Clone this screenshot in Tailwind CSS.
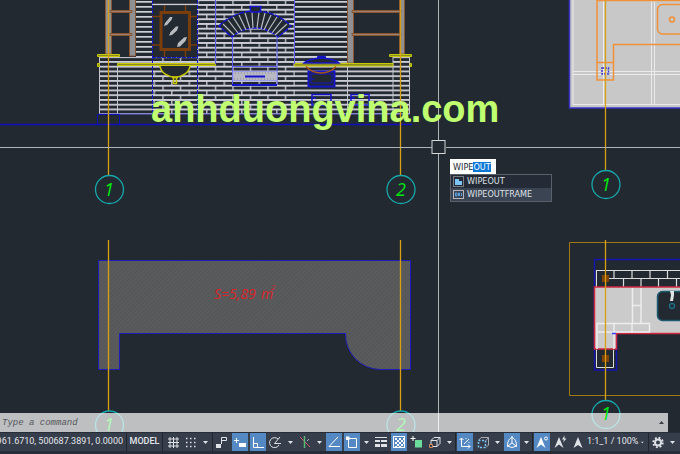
<!DOCTYPE html>
<html lang="en">
<head>
    <meta charset="UTF-8">
    <meta name="viewport" content="width=device-width, initial-scale=1.0">
    <title>Drawing</title>
    <script src="https://cdn.jsdelivr.net/npm/@tailwindcss/browser@4"></script>
</head>
<body class="h-screen flex flex-col overflow-hidden bg-[#222930] font-['Roboto',sans-serif]">

    <!-- Model space -->
    <main class="relative flex-1 min-h-0 overflow-hidden">
        <svg class="absolute inset-0 w-full h-full" viewBox="0 0 680 432" preserveAspectRatio="xMinYMin slice" fill="none">
            <defs>
                <pattern id="siding-top" width="10" height="5" y="1" patternUnits="userSpaceOnUse">
                    <rect width="10" height="1.700" fill="#ccd0d4"/>
                </pattern>
                <pattern id="siding" width="10" height="4.750" y="70.500" patternUnits="userSpaceOnUse">
                    <rect width="10" height="1.800" fill="#cdcdd8"/>
                </pattern>
                <pattern id="brick" width="17.500" height="9.500" x="206" y="70.500" patternUnits="userSpaceOnUse">
                    <path d="M0 .900H17.500M0 5.650H17.500" stroke="#cdcdd8" stroke-width="1.800"/>
                    <path d="M.800 .900V5.600M9.500 5.600V9.500" stroke="#cdcdd8" stroke-width="1.300"/>
                </pattern>
                <pattern id="hatch" width="3" height="3" patternUnits="userSpaceOnUse" patternTransform="rotate(45)">
                    <rect width="3" height="3" fill="#5a5b5d"/>
                    <rect width="1" height="3" fill="#545557"/>
                </pattern>
            </defs>

            <!-- Elevation: walls -->
            <rect x="136" y="0" width="16" height="57" fill="url(#siding-top)"/>
            <rect x="99" y="57" width="54" height="57" fill="url(#siding)"/>
            <rect x="152" y="57" width="143" height="57" fill="url(#brick)"/>
            <rect x="197" y="0" width="98" height="57" fill="url(#brick)"/>
            <rect x="295" y="0" width="52" height="57" fill="url(#siding-top)"/>
            <rect x="295" y="57" width="52" height="57" fill="url(#siding)"/>
            <rect x="347" y="66" width="63" height="48" fill="url(#siding)"/>
            <rect x="393" y="57" width="17" height="10" fill="url(#siding)"/>
            <path d="M99.500 57V114M117.500 66V114M347.500 66V114M393 57V114M409.500 57V114" stroke="#c4c6cc"/>
            <path d="M99 114H410" stroke="#6a6ae0"/>
            <path d="M152 4.500H197" stroke="#cdcdd8" stroke-width="1.500"/>

            <!-- Elevation: shelves -->
            <g stroke="#8a5630">
                <path d="M105.500 -1V54H111.500V-1M129.500 -1V56H135.500V-1M347.500 -1V63H353.500V-1M399.500 -1V54H404.500V-1" fill="#8f9093"/>
                <path d="M110 10.500H132V12.500H110zM110 33.500H132V35.500H110zM352 10.500H401V12.500H352zM352 33.500H401V35.500H352z" fill="#9a8070"/>
            </g>

            <!-- Elevation: mirror and basin -->
            <rect x="152" y="5.500" width="45" height="52" fill="#222930"/>
            <path d="M152.500 0V114M204.500 0V0M197.500 0V114M152 57.500H197" stroke="#1414c8" stroke-dasharray="4 1"/>
            <path d="M164.500 5V57M185.500 5V57M152 16.500H197M152 45H197" stroke="#7a3d0c" stroke-width="1.500"/>
            <rect x="161" y="12.500" width="28.500" height="37" fill="#222930" stroke="#7a3d0c" stroke-width="3"/>
            <path d="M164 26L165 23L170 17L172.500 17L171.500 20L167 25zM169 35.500L170.500 32L176 26.500H178.500L177 30.500L172 35zM177 47L178 43L184 37.500L187 37L185.500 41L180 46.500z" fill="#b8bbbf"/>
            <g fill="#8c8c24" stroke="#c8c800">
                <path d="M97.500 54.500H119.500V56.500H97.500zM117.500 63.500H215.500V65.500H117.500zM97.500 63.500H99.500V66.500H97.500z"/>
                <path d="M389.500 54.500H411.500V56.500H389.500zM294.500 63.500H393V66H294.500zM410 63.500H411.500V66.500H410z"/>
            </g>
            <path d="M160 66C161 73 168 77 175 77S189 73 190 66" fill="#222930" stroke="#c8c800" stroke-width="1.500"/>
            <path d="M172 77.500H178M173.500 78V83.500H176.500V78" stroke="#c8c800" stroke-width="1.500"/>

            <!-- Elevation: fireplace arch -->
            <path d="M219 26A50.700 50.700 0 0 1 291 26L278 37A33.700 33.700 0 0 0 232 37z" fill="#222930" stroke="#1414c8" stroke-width="1.500" stroke-dasharray="5 1"/>
            <path d="M223 24L234 35M228 20L238 33M233 17L242 31M239 15L246 30M245 13L250 29M252 12L253 28M259 12L257 28M265 13L261 29M271 15L264 30M277 17L268 31M282 20L272 33M287 24L275 35" stroke="#b8bbbf" stroke-width="1.200"/>
            <path d="M250 6.500H261L260 12H251z" fill="#222930" stroke="#1414c8" stroke-width="1.500"/>
            <path d="M215.500 0V64M294.500 0V64M232.500 37V85M277 37V85M232 66.500H277M232 85H277" stroke="#5a5af0"/>
            <rect x="233" y="71.500" width="44" height="9" fill="#b9b9c6" stroke="#9c9cf0"/>
            <path d="M235 73H276M234 79H276" stroke="#8c8c92" stroke-dasharray="1 2"/>
            <path d="M245 76.500H265M232 85H277" stroke="#1414c8" stroke-width="2"/>

            <!-- Elevation: sink on the right -->
            <path d="M304 63Q308 59 321 58Q335 59 339 63zM318 58V56.500H325V58" fill="#222930" stroke="#1414c8" stroke-width="1.500"/>
            <rect x="308.500" y="71.500" width="26" height="15" fill="#222930" stroke="#1414c8" stroke-width="2"/>
            <path d="M311 74H332V83H311zM311 79H315" stroke="#1414c8"/>
            <path d="M306 66.500Q312 73 321 73T336 66.500" stroke="#a5561c" stroke-width="1.500"/>
            <path d="M312 94.500H331V105H312zM351 94.500H369V105H351zM312 98H316M351 98H355" stroke="#1414c8" stroke-width="1.500"/>
            <path d="M0 124.500H412" stroke="#1010c0" stroke-width="1.500"/>
            <path d="M97.500 124V114.500H119.500V124M345.500 114V124" stroke="#1010b0"/>

            <!-- Top right plan -->
            <path d="M569.500 -1V108H681V-1z" fill="#c8c8c8" stroke="#3a34c8" stroke-width="1.500"/>
            <path d="M573 0V104.500H680M603.500 0V104M651.500 0V104M654.500 0V104M573 71.500H680M573 74.500H680" stroke="#ebebeb"/>
            <path d="M597 0V80H613.500V44.500H680M597 .500H680M597 62.500H613.500" stroke="#f0913a" stroke-width="1.500"/>
            <rect x="657.500" y="4.500" width="40" height="29.500" rx="5" stroke="#f0913a" stroke-width="1.500"/>
            <circle cx="672" cy="19.500" r="2.500" stroke="#f0913a" stroke-width="1.500"/>
            <rect x="602" y="68" width="6.500" height="6" stroke="#3a34c8" stroke-width="1.500" stroke-dasharray="2 1"/>

            <!-- Counter area -->
            <path d="M98.500 260.500H410.500V369.500H380A35 35 0 0 1 345.500 333.500H119.500V369.500H98.500z" fill="url(#hatch)" stroke="#1c1cb8"/>
            <g class="font-['Open_Sans',sans-serif] italic" fill="#dc2428" font-size="14">
                <text x="214" y="299">S=5,89</text>
                <text x="261" y="299">m</text>
                <text x="271" y="290" font-size="8">2</text>
            </g>

            <!-- Bottom right plan -->
            <path d="M681 242.500H569.500V395.500H681" stroke="#a07814"/>
            <path d="M680 259.500H594.500V370H616.500V333" stroke="#1414b0" stroke-width="1.500"/>
            <path d="M680 270.500H596.500V287M596 278.500H680M614 270V279M632 270V279M650 270V279M667.500 270V279M605.500 279V287M623.500 279V287M641 279V287M658.500 279V287M676.500 279V287" stroke="#dcdcdc" stroke-width="1.200"/>
            <rect x="597" y="271" width="9" height="16" fill="#222930"/>
            <path d="M596.500 349V367.500H613.500V349" fill="#222930" stroke="#dcdcdc"/>
            <path d="M681 287H594.500V349H616.500V333.500H681" fill="#cbcbcb" stroke="#d02840" stroke-width="1.500"/>
            <path d="M632.500 288V324M641 288V324M632 305.500H641M597 349V323.500H649.500V332H597M614 323V349M632 323V332" stroke="#ededed" stroke-width="1.500"/>
            <path d="M612 333.500H616" stroke="#4040ff" stroke-width="1.500"/>
            <rect x="657.500" y="291.500" width="40" height="29" rx="5" fill="#222930" stroke="#1c5a70" stroke-width="1.500"/>
            <circle cx="672" cy="306" r="2.500" stroke="#1c6a80" stroke-width="1.500"/>
            <path d="M670 291H674V295L673 301H670L671 295z" fill="#dfe6e8"/>
            <path d="M602 275H609V282H602zM602 355H609V362H602z" fill="#804408"/>

            <!-- Grid axes -->
            <path d="M108.500 0V175M400.500 0V175M108.500 240V411M400.500 240V411M605.500 0V171M605.500 240V400" stroke="#d8a010" stroke-width="1.300"/>
            <g stroke="#16a8ac" stroke-width="1.300">
                <circle cx="109.500" cy="189.500" r="14"/>
                <circle cx="401" cy="189.500" r="14"/>
                <circle cx="109.500" cy="425" r="14"/>
                <circle cx="401" cy="425" r="14"/>
                <circle cx="606" cy="184.500" r="14"/>
                <circle cx="606" cy="414.500" r="14"/>
            </g>
            <g class="font-['Open_Sans',sans-serif] italic" fill="#00e810" font-size="18" text-anchor="middle">
                <text x="109" y="196">1</text>
                <text x="401" y="196">2</text>
                <text x="109" y="431">1</text>
                <text x="401" y="431">2</text>
                <text x="606" y="191">1</text>
            </g>

            <!-- Crosshair -->
            <path d="M0 147.500H432M446 147.500H680M438.500 0V140M438.500 154V432" stroke="#b0b3b6"/>
            <rect x="432" y="140.500" width="13" height="13" stroke="#d6d8da"/>

            <text class="font-['Liberation_Sans',sans-serif] font-bold" x="151" y="122" font-size="38" fill="#bfff70">anhduongvina.com</text>
        </svg>

        <!-- Dynamic input -->
        <div class="absolute left-[450px] top-[159px] w-[102px] font-['DejaVu_Sans_Condensed','DejaVu_Sans',sans-serif] text-[9px] leading-[13px]">
            <input id="dynamic-input" type="text" value="WIPEOUT" aria-label="Command" autofocus class="block w-[46px] h-[15px] pl-[3px] bg-white text-[#222930] caret-transparent outline-none selection:bg-[#0a78d6] selection:text-white">
            <ul class="border border-[#5a606a] bg-[#252b36] text-[#dfe2e6]">
                <li>
                    <button class="flex w-full items-center gap-[3px] pl-[2px]">
                        <svg class="w-[11px] h-[11px]" viewBox="0 0 11 11" fill="none"><rect x=".500" y=".500" width="10" height="10" stroke="#c8ccd2" stroke-dasharray="1 1"/><path d="M2 3H6V5H9V9H2z" fill="#7cc4f4"/></svg>
                        WIPEOUT
                    </button>
                </li>
                <li>
                    <button class="flex w-full items-center gap-[3px] pl-[2px] bg-[#3b4453]">
                        <svg class="w-[11px] h-[11px]" viewBox="0 0 11 11" fill="none"><rect x=".500" y="1.500" width="10" height="8" stroke="#b4b8be"/><path d="M2.500 4V7H4V4zM5.500 7V4H6.500V7M8.500 4V7" stroke="#5aa0dc"/></svg>
                        WIPEOUTFRAME
                    </button>
                </li>
            </ul>
        </div>

        <!-- Command line -->
        <div class="absolute left-0 right-3 bottom-0 h-[19px] flex items-center bg-white/70">
            <input type="text" placeholder="Type a command" aria-label="Command line" class="flex-1 h-full pl-[2px] font-['Liberation_Mono',monospace] italic text-[9px] placeholder:text-[#55585c] outline-none">
            <button aria-label="Command history" class="w-[13px] h-full flex items-center justify-center">
                <svg class="w-[5px] h-[3px]" viewBox="0 0 5 3"><path d="M0 3L2.500 0L5 3z" fill="#3a3e44"/></svg>
            </button>
        </div>
        <svg class="absolute inset-0 w-full h-full pointer-events-none" viewBox="0 0 680 432" preserveAspectRatio="xMinYMin slice">
            <text class="font-['Open_Sans',sans-serif] italic" x="606" y="420" font-size="18" text-anchor="middle" fill="#00e810">1</text>
            <path d="M438.500 413V432" stroke="#f0f0f0"/>
        </svg>
    </main>

    <!-- Status bar -->
    <footer class="h-[22px] shrink-0 flex pt-px pb-[3px] bg-[#272d38] text-[9px] text-[#e4e6ea]">
        <div class="w-[127px] shrink-0 flex items-center justify-end overflow-hidden whitespace-nowrap pr-[3px] border-r border-[#20252e] bg-[#363e4c]">4961.6710, 500687.3891, 0.0000</div>
        <button class="w-9 border-r border-[#20252e] bg-[#363e4c] font-medium">MODEL</button>

        <div class="flex shrink-0 px-px border-r border-[#20252e] bg-[#363e4c]">
            <button aria-label="Grid" class="w-[18px]"><svg class="w-[18px] h-[18px]" viewBox="0 0 18 18" fill="none" stroke="#dfe2e6"><path d="M6 4V15M9.500 4V15M13 4V15M4 6H15M4 9.500H15M4 13H15"/></svg></button>
            <button aria-label="Snap" class="w-[18px]"><svg class="w-[18px] h-[18px]" viewBox="0 0 18 18" fill="none" stroke="#dfe2e6" stroke-width="1.500" stroke-dasharray="1.500 2.500"><path d="M4 5.500H14M4 9.500H14M4 13.500H14"/></svg></button>
            <button aria-label="Snap options" class="w-[11px] flex items-center justify-center"><svg class="w-[5px] h-[3px]" viewBox="0 0 5 3"><path d="M0 0H5L2.500 3z" fill="#dfe2e6"/></svg></button>
        </div>

        <div class="flex shrink-0 border-r border-[#20252e] bg-[#363e4c]">
            <button aria-label="Infer constraints" class="w-[18px]"><svg class="w-[18px] h-[18px]" viewBox="0 0 18 18" fill="none" stroke="#dfe2e6"><path d="M8.500 4.500H13.500V7.500H8.500zM8.500 7V11"/><path d="M3 11H8V15H3z" fill="#dfe2e6" stroke="none"/></svg></button>
            <button aria-label="Dynamic input" class="w-[18px] border-x border-[#363e4c] bg-[#5589c4]"><svg class="w-4 h-[18px]" viewBox="0 0 16 18" fill="none"><path d="M2 7.500H7M4.500 5V10" stroke="#fff"/><path d="M7 10H14V14H7z" fill="#fff"/></svg></button>
            <button aria-label="Ortho" class="w-[18px] border-x border-[#363e4c] bg-[#5589c4]"><svg class="w-4 h-[18px]" viewBox="0 0 16 18" fill="none" stroke="#fff"><path d="M3.500 4V14.500H14M4 10.500H7.500V14"/></svg></button>
            <button aria-label="Polar tracking" class="w-[18px]"><svg class="w-[18px] h-[18px]" viewBox="0 0 18 18" fill="none" stroke="#dfe2e6"><path d="M11 6A5 5 0 1 0 12 12M7.500 10.500L13 4M7.500 10.500H14"/></svg></button>
            <button aria-label="Polar options" class="w-[11px] flex items-center justify-center"><svg class="w-[5px] h-[3px]" viewBox="0 0 5 3"><path d="M0 0H5L2.500 3z" fill="#dfe2e6"/></svg></button>
            <button aria-label="Isodraft" class="w-[18px]"><svg class="w-[18px] h-[18px]" viewBox="0 0 18 18" fill="none"><path d="M4 4L14 14" stroke="#d05a64"/><path d="M8.500 3V15" stroke="#58b878" stroke-width="1.500"/><path d="M11 8L13 6" stroke="#aab0b8"/></svg></button>
            <button aria-label="Isodraft options" class="w-[11px] flex items-center justify-center"><svg class="w-[5px] h-[3px]" viewBox="0 0 5 3"><path d="M0 0H5L2.500 3z" fill="#dfe2e6"/></svg></button>
            <button aria-label="Object snap tracking" class="w-[18px] border-x border-[#363e4c] bg-[#5589c4]"><svg class="w-4 h-[18px]" viewBox="0 0 16 18" fill="none" stroke="#fff"><path d="M12 4L3 13.500H14"/></svg></button>
            <button aria-label="Object snap" class="w-[18px] border-x border-[#363e4c] bg-[#5589c4]"><svg class="w-4 h-[18px]" viewBox="0 0 16 18" fill="none" stroke="#fff"><path d="M4.500 5.500H12.500V14.500H4.500z"/><path d="M2 3.500H5.500V7H2z" fill="#fff" stroke="none"/></svg></button>
            <button aria-label="Object snap options" class="w-[11px] flex items-center justify-center"><svg class="w-[5px] h-[3px]" viewBox="0 0 5 3"><path d="M0 0H5L2.500 3z" fill="#dfe2e6"/></svg></button>
            <button aria-label="Lineweight" class="w-[18px]"><svg class="w-[18px] h-[18px]" viewBox="0 0 18 18" fill="#dfe2e6"><path d="M3 4H15V5H3zM3 7H8V9H3zM9 7H15V9H9zM3 11H8V14H3zM9 11H15V14H9z"/></svg></button>
            <button aria-label="Transparency" class="w-[18px] border-x border-[#363e4c] bg-[#5589c4]"><svg class="w-4 h-[18px]" viewBox="0 0 16 18" fill="none"><rect x="2.500" y="3.500" width="11" height="11" stroke="#fff"/><path d="M4 5H6V7H4zM8 5H10V7H8zM12 5H13V7H12zM6 7H8V9H6zM10 7H12V9H10zM4 9H6V11H4zM8 9H10V11H8zM12 9H13V11H12zM6 11H8V13H6zM10 11H12V13H10zM4 13H6V14H4zM8 13H10V14H8z" fill="#fff"/></svg></button>
            <button aria-label="Selection cycling" class="w-[18px]"><svg class="w-[18px] h-[18px]" viewBox="0 0 18 18"><path d="M7 7H14V14.500H7z" fill="#6cdc9c"/><path d="M2.500 5.500H7.500M5 3V8" stroke="#fff"/></svg></button>
            <button aria-label="3D object snap" class="w-[18px]"><svg class="w-[18px] h-[18px]" viewBox="0 0 18 18" fill="none" stroke="#dfe2e6"><path d="M5 7.500H11V13.500H5zM5 7.500L8 4.500H14V10.500L11 13.500M11 7.500L14 4.500"/><path d="M3.500 11.500H6.500V14.500H3.500z" fill="#363e4c" stroke="#d08a5c"/></svg></button>
            <button aria-label="3D object snap options" class="w-[11px] flex items-center justify-center"><svg class="w-[5px] h-[3px]" viewBox="0 0 5 3"><path d="M0 0H5L2.500 3z" fill="#dfe2e6"/></svg></button>
        </div>

        <div class="flex shrink-0 border-r border-[#20252e] bg-[#363e4c]">
            <button aria-label="Dynamic UCS" class="w-[18px] border-x border-[#363e4c] bg-[#5589c4]"><svg class="w-4 h-[18px]" viewBox="0 0 16 18" fill="none" stroke="#fff"><path d="M4.500 5V13.500H13M2.500 7L4.500 5L6.500 7M11 11.500L13 13.500L11 15.500M7 11L12 6M8.500 5.500H9.500M12 9V10"/></svg></button>
            <button aria-label="Selection filter" class="w-[18px]"><svg class="w-[18px] h-[18px]" viewBox="0 0 18 18" fill="none"><path d="M5 7L7 4.500H14.500V12L12 14.500M12 7.500L14.500 4.500" stroke="#a8acb2"/><path d="M4.500 7.500H11.500V14.500H4.500z" stroke="#7cc4f4" stroke-width="1.500" stroke-dasharray="2 1.500"/></svg></button>
            <button aria-label="Selection filter options" class="w-[11px] flex items-center justify-center"><svg class="w-[5px] h-[3px]" viewBox="0 0 5 3"><path d="M0 0H5L2.500 3z" fill="#dfe2e6"/></svg></button>
            <button aria-label="Gizmo" class="w-[18px] border-x border-[#363e4c] bg-[#5589c4]"><svg class="w-4 h-[18px]" viewBox="0 0 16 18" fill="none" stroke="#fff"><path d="M8 3V10M8 10L3 13.500M8 10L13 13.500"/><path d="M8 4.500C4.500 6 3.500 9 3.500 13Q8 16 12.500 13C12.500 9 11.500 6 8 4.500z"/></svg></button>
            <button aria-label="Gizmo options" class="w-[11px] flex items-center justify-center"><svg class="w-[5px] h-[3px]" viewBox="0 0 5 3"><path d="M0 0H5L2.500 3z" fill="#dfe2e6"/></svg></button>
        </div>

        <div class="flex shrink-0 border-r border-[#20252e] bg-[#363e4c]">
            <button aria-label="Annotation visibility" class="w-[18px] border-x border-[#363e4c] bg-[#5589c4]"><svg class="w-4 h-[18px]" viewBox="0 0 16 18" fill="none"><path d="M7 4L11.500 15L7 11.500L2.500 15z" fill="#fff"/><circle cx="12" cy="5.500" r="1.500" stroke="#fff"/></svg></button>
            <button aria-label="Auto scale" class="w-[18px]"><svg class="w-[18px] h-[18px]" viewBox="0 0 18 18"><path d="M8 4L12.500 15L8 11.500L3.500 15z" fill="#dfe2e6"/><path d="M13.500 2.500L11 6.500H13L12 9.500L15.500 5.500H13.500z" fill="#dfe2e6"/></svg></button>
            <button aria-label="Annotation scale" class="w-[18px]"><svg class="w-[18px] h-[18px]" viewBox="0 0 18 18"><path d="M9 4L13.500 15L9 12L4.500 15z" fill="#dfe2e6"/></svg></button>
            <button class="w-[61px] flex items-center justify-end gap-[3px] pr-1 whitespace-nowrap">1:1_1 / 100%<svg class="w-[5px] h-[3px]" viewBox="0 0 5 3"><path d="M0 0H5L2.500 3z" fill="#dfe2e6"/></svg></button>
        </div>

        <div class="flex flex-1 bg-[#363e4c]">
            <button aria-label="Workspace" class="w-[18px]"><svg class="w-[18px] h-[18px]" viewBox="0 0 18 18" fill="none" stroke="#dfe2e6"><circle cx="9" cy="9.500" r="3" stroke-width="2"/><circle cx="9" cy="9.500" r="4.800" stroke-width="1.800" stroke-dasharray="1.900 1.870"/></svg></button>
            <button aria-label="Workspace options" class="w-[11px] flex items-center justify-center"><svg class="w-[5px] h-[3px]" viewBox="0 0 5 3"><path d="M0 0H5L2.500 3z" fill="#dfe2e6"/></svg></button>
        </div>
    </footer>

    <script>
        const dynamicInput = document.getElementById('dynamic-input');
        dynamicInput.focus();
        dynamicInput.setSelectionRange(4, 7);
    </script>
</body>
</html>
